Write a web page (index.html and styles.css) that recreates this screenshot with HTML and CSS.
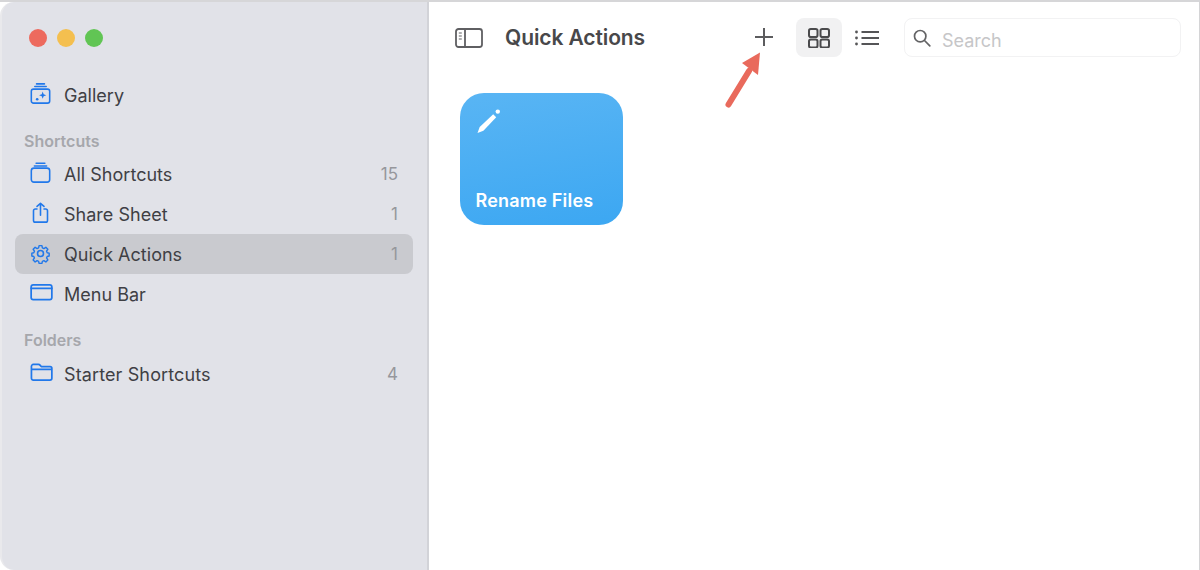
FILE: index.html
```html
<!DOCTYPE html>
<html lang="en">
<head>
<meta charset="utf-8">
<title>Quick Actions</title>
<link rel="stylesheet" href="styles.css">
</head>
<body>
<div class="window">
  <aside class="sidebar">
    <div class="lights">
      <span class="light red"></span><span class="light yellow"></span><span class="light green"></span>
    </div>
    <nav class="nav">
      <div class="row">
        <svg class="ico" viewBox="0 0 24 24"><path d="M7.500 1h9M5.500 4h13"/><rect x="1.500" y="7" width="21" height="16" rx="2.500"/><path class="fill" d="M14.500 9.800l1.100 3 3 1.100-3 1.100-1.100 3-1.100-3-3-1.100 3-1.100z"/><circle class="fill" cx="8.200" cy="18.500" r="1.500"/></svg>
        <span class="label">Gallery</span>
      </div>
      <div class="heading first">Shortcuts</div>
      <div class="row">
        <svg class="ico" viewBox="0 0 24 24"><path d="M7 1.500h10M5 4.500h14"/><rect x="1.500" y="7" width="21" height="16" rx="3"/></svg>
        <span class="label">All Shortcuts</span><span class="count">15</span>
      </div>
      <div class="row">
        <svg class="ico" viewBox="0 0 24 24"><path d="M8 8H6a2 2 0 0 0-2 2v11a2 2 0 0 0 2 2h12a2 2 0 0 0 2-2V10a2 2 0 0 0-2-2h-2M12 15V1.500M8 5l4-3.500L16 5"/></svg>
        <span class="label">Share Sheet</span><span class="count">1</span>
      </div>
      <div class="row selected">
        <svg class="ico" viewBox="0 0 24 24"><circle cx="12" cy="12" r="3.400"/><path d="M10.200 2h3.600l.6 2.900 1.900.8 2.500-1.600 2.500 2.500-1.600 2.500.8 1.900 2.500.6v3.600l-2.500.6-.8 1.900 1.600 2.500-2.500 2.500-2.500-1.600-1.900.8-.6 2.600h-3.600l-.6-2.600-1.900-.8-2.500 1.600-2.500-2.500 1.600-2.500-.8-1.900-2.500-.6v-3.600l2.500-.6.8-1.900-1.600-2.500 2.500-2.500 2.500 1.600 1.900-.8z" transform="translate(1.200 1.200) scale(.9)"/></svg>
        <span class="label">Quick Actions</span><span class="count">1</span>
      </div>
      <div class="row">
        <svg class="ico wide" viewBox="0 0 24 24"><rect x="1.200" y="4" width="21.600" height="15.500" rx="2.200"/><path d="M1.200 7.600h21.600"/></svg>
        <span class="label">Menu Bar</span>
      </div>
      <div class="heading second">Folders</div>
      <div class="row">
        <svg class="ico wide" viewBox="0 0 24 24"><path d="M1.500 7V5.600A2 2 0 0 1 3.500 3.600h5.200c1 0 1.400.3 2 1l1 1.200h9.300a1.800 1.800 0 0 1 1.800 1.800V18a2 2 0 0 1-2 2H3.500a2 2 0 0 1-2-2zM1.500 8.700h21"/></svg>
        <span class="label long">Starter Shortcuts</span><span class="count">4</span>
      </div>
    </nav>
  </aside>
  <main class="main">
    <header class="toolbar">
      <svg class="tool-sidebar" viewBox="0 0 28 20"><rect x="1" y="1" width="26" height="18" rx="2.500"/><path d="M10 1v18"/><path class="thin" d="M3.800 5h3M3.800 8h3M3.800 11h3"/></svg>
      <h1 class="title">Quick Actions</h1>
      <svg class="tool-plus" viewBox="0 0 20 20"><path d="M10 1v18M1 10h18"/></svg>
      <div class="view-active">
        <svg class="tool-grid" viewBox="0 0 22 20"><rect x="1" y="1" width="8.500" height="8" rx="1.800"/><rect x="12.500" y="1" width="8.500" height="8" rx="1.800"/><rect x="1" y="11.500" width="8.500" height="8" rx="1.800"/><rect x="12.500" y="11.500" width="8.500" height="8" rx="1.800"/></svg>
      </div>
      <svg class="tool-list" viewBox="0 0 24 16"><path d="M6.500 2H24M6.500 8H24M6.500 14H24"/><circle cx="1.500" cy="2" r="1.400"/><circle cx="1.500" cy="8" r="1.400"/><circle cx="1.500" cy="14" r="1.400"/></svg>
      <div class="search">
        <svg class="search-ico" viewBox="0 0 18 18"><circle cx="7.200" cy="7.200" r="5.700"/><path d="M11.500 11.500L16.800 16.800"/></svg>
        <span class="search-text">Search</span>
      </div>
    </header>
    <section class="content">
      <article class="card">
        <svg class="pencil" viewBox="0 0 24 24"><path d="M1.500 24L3.700 18 17.200 5.200 20.200 8.200 7.400 21.800z"/><circle cx="21.800" cy="2.600" r="2.200"/></svg>
        <div class="card-name">Rename Files</div>
      </article>
    </section>
    <svg class="arrow" viewBox="0 0 40 60"><path d="M4.500 52.500L25 19" class="shaft"/><path class="head" d="M36 0.500L18 11 34 23z"/></svg>
  </main>
</div>
</body>
</html>
```
FILE: styles.css
```css
* { box-sizing: border-box; }
html, body { margin: 0; height: 100%; background: #fff; overflow: hidden; }
body { font-family: Inter, "Liberation Sans", sans-serif; color: #3f3f44; }
.window {
  display: flex;
  width: 1200px;
  height: 570px;
  border-top: 2px solid #d6d6d8;
  border-right: 1px solid #d4d4d6;
  background: #fff;
}
.sidebar {
  width: 429px;
  flex: none;
  background: #e1e2e8;
  border-right: 2px solid #d2d3d8;
  border-left: 2px solid #e9e9ec;
  border-top-left-radius: 14px;
  border-bottom-left-radius: 14px;
  padding: 27px 14px 0 13px;
}
.lights { display: flex; gap: 10px; padding-left: 14px; }
.light { width: 18px; height: 18px; border-radius: 50%; }
.red { background: #ed6a5e; }
.yellow { background: #f4bf4f; }
.green { background: #61c554; }
.nav { margin-top: 28px; }
.row {
  display: flex;
  align-items: center;
  height: 40px;
  padding: 0 15px;
  border-radius: 8px;
  font-size: 18px;
  color: #3f3f44;
}
.row.selected { background: #c9cacf; }
.ico {
  width: 21px;
  height: 21px;
  flex: none;
  margin-right: 13px;
  margin-top: -3px;
  fill: none;
  stroke: #2178ea;
  stroke-width: 1.800;
  stroke-linecap: round;
  stroke-linejoin: round;
}
.row.selected .ico { margin-top: -1px; }
.ico.wide { width: 23px; height: 23px; margin-right: 11px; margin-top: -3px; }
.ico .fill { fill: #2178ea; stroke: none; }
.label { flex: 1; letter-spacing: .02px; }
.label.long { letter-spacing: .12px; }
.count { font-size: 17px; color: #96979c; }
.heading { font-size: 16px; font-weight: 600; color: #a6a7ac; padding-left: 9px; height: 18px; line-height: 18px; }
.heading.first { margin-top: 17px; margin-bottom: 4px; }
.heading.second { margin-top: 17px; margin-bottom: 5px; }
.main { flex: 1; position: relative; min-width: 0; }
.toolbar { display: flex; align-items: center; height: 72px; padding-left: 26px; }
.tool-sidebar { width: 28px; height: 20px; flex: none; fill: none; stroke: #5f5f62; stroke-width: 1.800; }
.tool-sidebar .thin { stroke-width: 1.200; }
.title { margin: 0 0 1px 22px; width: 249px; font-size: 21px; font-weight: 600; color: #48484a; letter-spacing: -.1px; flex: none; white-space: nowrap; }
.tool-plus { width: 20px; height: 20px; flex: none; stroke: #5c5c5e; stroke-width: 2; margin-right: 22px; margin-bottom: 2px; }
.view-active { width: 46px; height: 39px; margin-bottom: 1px; flex: none; background: #f1f1f2; border-radius: 8px; display: flex; align-items: center; justify-content: center; }
.tool-grid { width: 22px; height: 20px; fill: none; stroke: #4a4a4c; stroke-width: 2; }
.tool-list { width: 24px; height: 16px; flex: none; margin-left: 13px; margin-right: 25px; stroke: #555557; stroke-width: 1.800; fill: #555557; }
.tool-list circle { stroke: none; }
.search {
  display: flex;
  align-items: center;
  width: 277px;
  height: 39px;
  margin-bottom: 1px;
  flex: none;
  padding-left: 8px;
  border: 1.500px solid #f2f2f3;
  border-radius: 8px;
}
.search-ico { width: 18px; height: 18px; flex: none; fill: none; stroke: #636365; stroke-width: 1.700; stroke-linecap: round; margin-right: 11px; }
.search-text { font-size: 18px; color: #c6c6c8; margin-top: 5px; }
.content { padding: 19px 0 0 31px; }
.card {
  width: 163px;
  height: 132px;
  display: flex;
  flex-direction: column;
  justify-content: space-between;
  padding: 16px 15px 14px 16px;
  border-radius: 24px;
  background: linear-gradient(170deg, #59b5f4, #3ca7f2);
  color: #fff;
}
.pencil { width: 24px; height: 24px; fill: #fff; }
.card-name { font-size: 18px; font-weight: 600; letter-spacing: .2px; white-space: nowrap; margin-left: -.5px; }
.arrow { position: absolute; left: 295px; top: 50px; width: 40px; height: 60px; }
.shaft { stroke: #e96a5c; stroke-width: 6; stroke-linecap: round; fill: none; }
.head { fill: #e96a5c; }
```
